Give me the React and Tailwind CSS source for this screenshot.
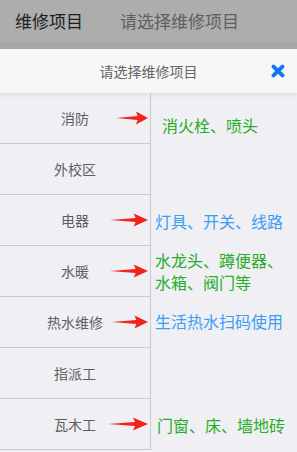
import React from "react";

const ROWS = [
  { label: "消防", note: ["消火栓、喷头"], color: "text-[#27ad27]", pad: "pl-[11px] pt-[12px]", arrow: "w-[32px]" },
  { label: "外校区" },
  { label: "电器", note: ["灯具、开关、线路"], color: "text-[#3b9df3]", pad: "pl-[4px]", arrow: "w-[38px]" },
  { label: "水暖", note: ["水龙头、蹲便器、", "水箱、阀门等"], color: "text-[#27ad27]", pad: "pl-[4px] pb-[2px]", arrow: "w-[38px]" },
  { label: "热水维修", note: ["生活热水扫码使用"], color: "text-[#3b9df3]", pad: "pl-[4px] pb-[3px]", arrow: "w-[36px]" },
  { label: "指派工" },
  { label: "瓦木工", note: ["门窗、床、墙地砖"], color: "text-[#27ad27]", pad: "pl-[6px]", arrow: "w-[40px]" },
];

const Arrow = ({ className }) => (
  <svg
    viewBox="0 0 40 14"
    preserveAspectRatio="none"
    className={`absolute right-[2px] top-1/2 -translate-y-1/2 h-[14px] ${className}`}
  >
    <polygon
      points="0,7 27,5 25,0.5 40,7 25,13.5 27,9"
      fill="#f2231d"
    />
  </svg>
);

const CloseIcon = () => (
  <svg viewBox="0 0 12 12" className="h-[14px] w-[14px]">
    <path
      d="M2.2 2.2 L9.8 9.8 M9.8 2.2 L2.2 9.8"
      stroke="#1179f2"
      strokeWidth="3.4"
      strokeLinecap="round"
    />
  </svg>
);

export default function App() {
  return (
    <div className="w-[297px] h-[452px] overflow-hidden bg-[#efeff4] font-['Noto_Sans_CJK_SC','Noto_Sans',sans-serif]">
      <div className="h-[42px] bg-[#adadad] flex items-center text-[17px]">
        <span className="pl-[15px] text-[#1e1e1e]">维修项目</span>
        <span className="ml-[37px] text-[#5f5f5f]">请选择维修项目</span>
      </div>
      <div className="h-[7px] bg-[#a6a6a6]" />

      <div className="relative z-10 h-[44px] bg-[#f7f7f7] flex items-center justify-center shadow-[0_2px_4px_rgba(0,0,0,0.08)]">
        <span className="text-[14px] text-[#666]">请选择维修项目</span>
        <button className="absolute right-[12px] top-1/2 -translate-y-1/2 flex">
          <CloseIcon />
        </button>
      </div>

      <div>
        {ROWS.map((row) => (
          <div key={row.label} className="flex h-[51px]">
            <div className="relative w-[151px] shrink-0 border-r border-b border-[#c9c8cd] flex items-center justify-center text-[14px] text-[#5e5e5e]">
              {row.label}
              {row.note ? <Arrow className={row.arrow} /> : null}
            </div>
            {row.note ? (
              <div className={`flex flex-col justify-center text-[16px] leading-[22px] ${row.color} ${row.pad}`}>
                {row.note.map((line) => (
                  <span key={line} className="whitespace-nowrap">{line}</span>
                ))}
              </div>
            ) : null}
          </div>
        ))}
      </div>
    </div>
  );
}
